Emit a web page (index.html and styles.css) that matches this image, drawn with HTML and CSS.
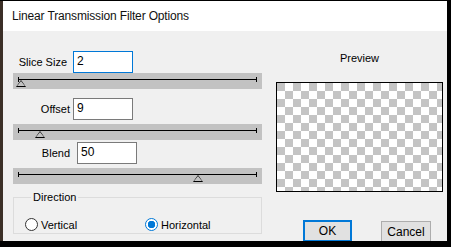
FILE: index.html
```html
<!DOCTYPE html>
<html lang="en">
<head>
    <meta charset="UTF-8">
    <meta name="viewport" content="width=device-width, initial-scale=1.0">
    <title>Linear Transmission Filter Options</title>
    <link rel="stylesheet" href="styles.css">
</head>
<body>
    <div class="dialog">
        <div class="titlebar">Linear Transmission Filter Options</div>

        <div class="content">
            <div class="controls">
                <div class="field">
                    <label for="sliceSize" class="label-slice">Slice Size</label>
                    <input type="text" id="sliceSize" class="focused" value="2">
                </div>
                <div class="slider">
                    <div class="track"></div>
                    <span class="thumb" style="left: 3px"></span>
                </div>

                <div class="field field-offset">
                    <label for="offset">Offset</label>
                    <input type="text" id="offset" value="9">
                </div>
                <div class="slider slider-gap">
                    <div class="track"></div>
                    <span class="thumb" style="left: 22px"></span>
                </div>

                <div class="field field-blend">
                    <label for="blend">Blend</label>
                    <input type="text" id="blend" value="50">
                </div>
                <div class="slider slider-gap">
                    <div class="track"></div>
                    <span class="thumb" style="left: 180px"></span>
                </div>

                <fieldset class="group">
                    <legend>Direction</legend>
                    <label class="radio radio-first"><span class="dot"></span>Vertical</label>
                    <label class="radio"><span class="dot checked"></span>Horizontal</label>
                </fieldset>
            </div>

            <div class="side">
                <div class="preview-label">Preview</div>
                <div class="preview"></div>
                <div class="buttons">
                    <button class="btn btn-default">OK</button>
                    <button class="btn btn-cancel">Cancel</button>
                </div>
            </div>
        </div>
    </div>
</body>
</html>
```

FILE: styles.css
```css
body {
    margin: 0;
    background-color: #000;
    font-family: "Liberation Sans", Arial, sans-serif;
    font-size: 11px;
    color: #000;
}
.dialog {
    margin-top: 1px;
    width: 444px;
    height: 240px;
    border-left: 3px solid #3b2f27;
    background-color: #f0f0f0;
    overflow: hidden;
}
.titlebar {
    height: 30px;
    line-height: 30px;
    padding-left: 9px;
    background-color: #fff;
    font-size: 12px;
    letter-spacing: -0.15px;
    color: #111;
}
.content {
    display: flex;
}
.controls {
    flex-shrink: 0;
    width: 249px;
    padding: 20px 0 0 10px;
}
.field {
    display: flex;
    align-items: center;
}
.field label {
    width: 57px;
    margin-right: 3px;
    text-align: right;
}
.field label.label-slice {
    width: 54px;
    margin-right: 6px;
}
.field-offset {
    margin-top: 9px;
}
.field-blend {
    margin-top: 2px;
}
.field-blend label {
    margin-right: 7px;
}
input {
    box-sizing: border-box;
    width: 60px;
    height: 22px;
    padding: 3px 3px 5px;
    border: 1px solid #7a7a7a;
    background-color: #fff;
    font-family: "Liberation Sans", Arial, sans-serif;
    font-size: 12px;
    color: #000;
    outline: none;
}
input.focused {
    border-color: #0078d7;
}
.slider {
    position: relative;
    box-sizing: border-box;
    height: 16px;
    padding: 6px 5px 0;
    background-color: #c2c2c2;
}
.slider-gap {
    margin-top: 4px;
}
.track {
    position: relative;
    height: 1px;
    background-color: #000;
}
.track::before,
.track::after {
    content: "";
    position: absolute;
    top: -2px;
    width: 1px;
    height: 5px;
    background-color: #000;
}
.track::before {
    left: 0;
}
.track::after {
    right: 0;
}
.thumb {
    position: absolute;
    top: 7px;
    width: 0;
    height: 0;
    border-left: 5px solid transparent;
    border-right: 5px solid transparent;
    border-bottom: 7px solid #000;
}
.thumb::after {
    content: "";
    position: absolute;
    left: -4px;
    top: 1px;
    border-left: 4px solid transparent;
    border-right: 4px solid transparent;
    border-bottom: 5px solid #c2c2c2;
}
.group {
    display: flex;
    align-items: center;
    margin: 6px 0 0;
    padding: 20px 0 8px 11px;
    height: 14px;
    border: 1px solid #dcdcdc;
}
.group legend {
    margin-left: 6px;
    padding: 0 2px;
    line-height: 14px;
}
.radio {
    display: flex;
    align-items: center;
    gap: 3px;
    line-height: 14px;
}
.radio-first {
    width: 120px;
}
.dot {
    box-sizing: border-box;
    width: 13px;
    height: 13px;
    border: 1px solid #333;
    border-radius: 50%;
    background-color: #fff;
}
.dot.checked {
    border-color: #0078d7;
    background: radial-gradient(circle, #0078d7 0 3.5px, #fff 4px);
}
.side {
    flex-shrink: 0;
    width: 171px;
    padding: 20px 0 0 14px;
}
.preview-label {
    width: 167px;
    line-height: 14px;
    text-align: center;
}
.preview {
    box-sizing: border-box;
    margin-top: 17px;
    width: 167px;
    height: 110px;
    border: 1px solid #000;
    background: repeating-conic-gradient(#fff 0 25%, #c4c4c4 0 50%) 0 0 / 16px 16px;
}
.buttons {
    display: flex;
    gap: 29px;
    margin-top: 28px;
    padding-left: 27px;
}
.btn {
    box-sizing: border-box;
    height: 22px;
    padding: 0;
    border: 1px solid #adadad;
    background-color: #e1e1e1;
    font-family: "Liberation Sans", Arial, sans-serif;
    font-size: 12px;
    color: #000;
}
.btn-default {
    width: 49px;
    border: 2px solid #0078d7;
}
.btn-cancel {
    width: 50px;
    margin-top: 1px;
}
```
